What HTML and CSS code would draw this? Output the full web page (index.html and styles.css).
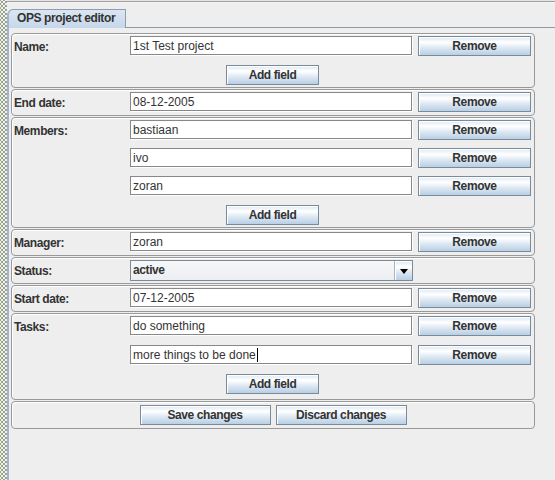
FILE: index.html
```html
<!DOCTYPE html>
<html>
<head>
<meta charset="utf-8">
<link rel="stylesheet" href="styles.css">
</head>
<body>
<div class="window">
  <div class="dots"></div>
  <div class="main">
    <div class="topline"></div>
    <div class="tabbar"><div class="tab">OPS project editor</div></div>
    <div class="content">
      <div class="panel">
        <div class="label">Name:</div>
        <div class="field">1st Test project</div>
        <div class="btn remove">Remove</div>
        <div class="add"><div class="btn addbtn">Add field</div></div>
      </div>
      <div class="panel">
        <div class="label">End date:</div>
        <div class="field">08-12-2005</div>
        <div class="btn remove">Remove</div>
      </div>
      <div class="panel">
        <div class="label">Members:</div>
        <div class="field">bastiaan</div>
        <div class="btn remove">Remove</div>
        <div class="field">ivo</div>
        <div class="btn remove">Remove</div>
        <div class="field">zoran</div>
        <div class="btn remove">Remove</div>
        <div class="add"><div class="btn addbtn">Add field</div></div>
      </div>
      <div class="panel">
        <div class="label">Manager:</div>
        <div class="field">zoran</div>
        <div class="btn remove">Remove</div>
      </div>
      <div class="panel">
        <div class="label">Status:</div>
        <div class="combo"><span class="combo-text">active</span><span class="combo-arrow"><span class="tri"></span></span></div>
      </div>
      <div class="panel">
        <div class="label">Start date:</div>
        <div class="field">07-12-2005</div>
        <div class="btn remove">Remove</div>
      </div>
      <div class="panel tasks">
        <div class="label">Tasks:</div>
        <div class="field">do something</div>
        <div class="btn remove">Remove</div>
        <div class="field">more things to be done<span class="caret"></span></div>
        <div class="btn remove">Remove</div>
        <div class="add"><div class="btn addbtn">Add field</div></div>
      </div>
      <div class="panel actions">
        <div class="btn wide">Save changes</div>
        <div class="btn wide">Discard changes</div>
      </div>
    </div>
  </div>
</div>
</body>
</html>
```
FILE: styles.css
```css
html, body {
  margin: 0;
  padding: 0;
}
body {
  background: #eeeeee;
  font-family: "Liberation Sans", Arial, sans-serif;
  font-size: 12px;
  color: #333333;
}
.window {
  display: flex;
  height: 480px;
  overflow: hidden;
}
.dots {
  width: 7px;
  flex: none;
  background-color: #f2f3ee;
  background-image:
    radial-gradient(circle, #98a38c 0.8px, transparent 1.1px),
    radial-gradient(circle, #98a38c 0.8px, transparent 1.1px);
  background-size: 4px 4px;
  background-position: 0 0, 2px 2px;
}
.main {
  flex: 1;
  display: flex;
  flex-direction: column;
}
.topline {
  height: 3px;
  background: linear-gradient(#e4e4e4 0 1px, #a0a0a0 1px 2px, #f6f6f6 2px 3px);
}
.tabbar {
  height: 25px;
  box-sizing: border-box;
  display: flex;
  align-items: flex-end;
  border-bottom: 1px solid #8f9aab;
}
.tab {
  width: 119px;
  height: 19px;
  box-sizing: border-box;
  margin-bottom: -1px;
  border: 1px solid #8d9cb3;
  border-left: 2px solid #a4b1cf;
  border-bottom: none;
  border-top-left-radius: 6px;
  background: linear-gradient(#dbe6f2, #c6d7ea);
  font-weight: bold;
  letter-spacing: -0.4px;
  line-height: 17px;
  padding-left: 8px;
  color: #333333;
}
.content {
  flex: 1;
  border-left: 2px solid #a4b1cf;
  padding: 5px 0 0 2px;
}
.panel {
  width: 524px;
  box-sizing: border-box;
  border: 1px solid #999999;
  border-radius: 4px;
  box-shadow: inset 1px 1px 0 #ffffff;
  padding: 2px 3px 3px 2px;
  margin-bottom: 1px;
  display: grid;
  grid-template-columns: 116px 283px 118px;
  grid-auto-rows: 20px;
  row-gap: 8px;
}
.panel.tasks {
  row-gap: 9px;
  padding-bottom: 5px;
}
.panel.tasks .add {
  margin-top: 0;
}
.label {
  grid-column: 1;
  font-weight: bold;
  letter-spacing: -0.4px;
  line-height: 20px;
  padding-top: 1px;
}
.field {
  grid-column: 2;
  width: 282px;
  height: 19px;
  box-sizing: border-box;
  border: 1px solid #888888;
  box-shadow: 1px 1px 0 #ffffff;
  background: #ffffff;
  padding-left: 2px;
  line-height: 18px;
  white-space: nowrap;
  display: flex;
  align-items: center;
}
.caret {
  display: inline-block;
  width: 1px;
  height: 14px;
  background: #000000;
  margin-left: 1px;
}
.btn {
  height: 20px;
  box-sizing: border-box;
  border: 1px solid #7a8a99;
  box-shadow: inset 1px 1px 0 #ffffff;
  background: linear-gradient(#dde8f3 0%, #ffffff 30%, #dde8f3 60%, #b8cfe5 100%);
  font-weight: bold;
  letter-spacing: -0.4px;
  line-height: 18px;
  text-align: center;
  color: #333333;
}
.remove {
  grid-column: 3;
  justify-self: end;
  width: 113px;
}
.add {
  grid-column: 1 / -1;
  display: flex;
  justify-content: center;
  margin-top: 1px;
}
.addbtn {
  width: 93px;
}
.combo {
  grid-column: 2;
  width: 283px;
  height: 21px;
  box-sizing: border-box;
  border: 1px solid #7a8a99;
  display: flex;
  background: linear-gradient(#f6f7f9, #eceef1);
}
.combo-text {
  flex: 1;
  font-weight: bold;
  letter-spacing: -0.4px;
  line-height: 19px;
  padding-left: 2px;
}
.combo-arrow {
  width: 17px;
  border-left: 1px solid #a8b4c2;
  box-shadow: inset 1px 1px 0 #ffffff;
  background: linear-gradient(#dde8f3 0%, #ffffff 30%, #dde8f3 60%, #b8cfe5 100%);
  display: flex;
  align-items: center;
  justify-content: center;
}
.tri {
  width: 0;
  height: 0;
  border-left: 4px solid transparent;
  border-right: 4px solid transparent;
  border-top: 5px solid #000000;
  margin-top: 1px;
}
.actions {
  display: flex;
  justify-content: center;
  gap: 5px;
  padding: 3px 0 3px 0;
}
.wide {
  width: 131px;
}
```
